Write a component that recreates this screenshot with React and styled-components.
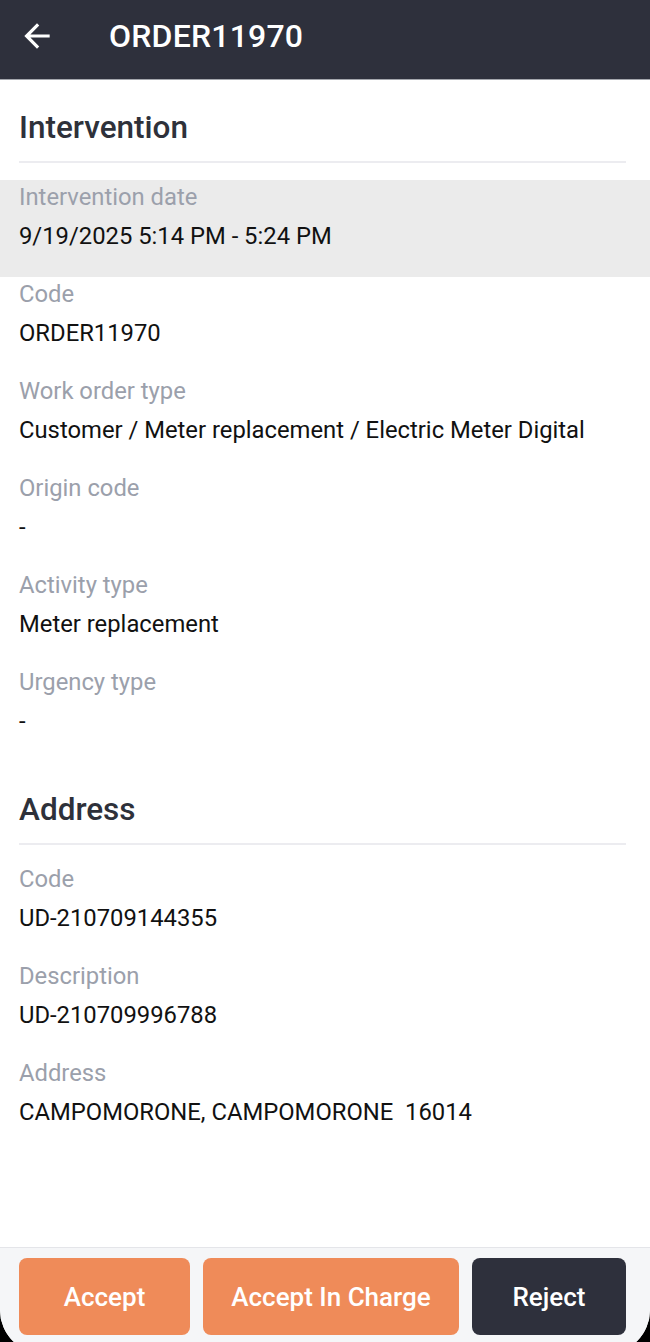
import React from "react";
import styled, { createGlobalStyle } from "styled-components";

const Global = createGlobalStyle`
  html, body {
    margin: 0;
    padding: 0;
    background: #000;
    overflow: hidden;
  }
  body {
    font-family: Roboto, "Liberation Sans", Arial, sans-serif;
  }
  * { box-sizing: border-box; }
`;

const Frame = styled.div`
  width: 650px;
  min-height: 1354px;
  background: #ffffff;
  display: flex;
  flex-direction: column;
  border-radius: 0 0 44px 44px;
  overflow: hidden;
`;

const Header = styled.header`
  height: 80px;
  background: #2e303c;
  border-bottom: 1px solid #a4a6ad;
  display: flex;
  align-items: center;
  padding-left: 18px;
  padding-bottom: 7px;
`;

const BackButton = styled.button`
  border: 0;
  background: transparent;
  padding: 0;
  width: 38px;
  height: 38px;
  display: flex;
  align-items: center;
  justify-content: center;
  color: #ffffff;
  cursor: pointer;
`;

const Title = styled.h1`
  margin: 0 0 0 53px;
  font-size: 32px;
  font-weight: 500;
  color: #ffffff;
  letter-spacing: 0.2px;
`;

const Content = styled.main`
  flex: 1;
  display: flex;
  flex-direction: column;
`;

const SectionHeading = styled.h2`
  margin: 30px 24px 17px 19px;
  padding-bottom: 15px;
  border-bottom: 2px solid #ececf0;
  font-size: 31.5px;
  line-height: 36px;
  font-weight: 500;
  color: #2e313a;
`;

const Field = styled.div`
  height: 97px;
  padding: 3px 24px 0 19px;
  background: ${(p) => (p.$highlight ? "#ebebeb" : "transparent")};
  display: flex;
  flex-direction: column;
  gap: 10px;
`;

const Label = styled.div`
  font-size: 23.8px;
  line-height: 28px;
  color: #9ba0ab;
`;

const Value = styled.div`
  font-size: 23.8px;
  line-height: 30px;
  color: #111111;
`;

const Footer = styled.footer`
  border-top: 1px solid #e4e5e9;
  background: #f5f6f8;
  padding: 10px 24px 19px 19px;
  display: grid;
  grid-template-columns: 171fr 256fr 154fr;
  gap: 13px;
`;

const ActionButton = styled.button`
  height: 77px;
  border: 0;
  border-radius: 8px;
  background: ${(p) => (p.$variant === "dark" ? "#2e303c" : "#ef8b59")};
  color: #ffffff;
  font-family: Roboto, "Liberation Sans", Arial, sans-serif;
  font-size: 26px;
  font-weight: 500;
  cursor: pointer;
`;

const BackArrow = () => (
  <svg width="38" height="38" viewBox="0 0 24 24" fill="currentColor">
    <path d="M20 11H7.83l5.59-5.59L12 4l-8 8 8 8 1.41-1.41L7.83 13H20v-2z" />
  </svg>
);

const intervention = [
  { label: "Intervention date", value: "9/19/2025 5:14 PM - 5:24 PM", highlight: true },
  { label: "Code", value: "ORDER11970" },
  { label: "Work order type", value: "Customer / Meter replacement / Electric Meter Digital" },
  { label: "Origin code", value: "-" },
  { label: "Activity type", value: "Meter replacement" },
  { label: "Urgency type", value: "-" },
];

const address = [
  { label: "Code", value: "UD-210709144355" },
  { label: "Description", value: "UD-210709996788" },
  { label: "Address", value: "CAMPOMORONE, CAMPOMORONE\u00a0 16014" },
];

export default function App() {
  return (
    <>
      <Global />
      <Frame>
        <Header>
          <BackButton aria-label="Back">
            <BackArrow />
          </BackButton>
          <Title>ORDER11970</Title>
        </Header>
        <Content>
          <SectionHeading>Intervention</SectionHeading>
          {intervention.map((f) => (
            <Field key={f.label} $highlight={f.highlight}>
              <Label>{f.label}</Label>
              <Value>{f.value}</Value>
            </Field>
          ))}
          <SectionHeading>Address</SectionHeading>
          {address.map((f) => (
            <Field key={f.label}>
              <Label>{f.label}</Label>
              <Value>{f.value}</Value>
            </Field>
          ))}
        </Content>
        <Footer>
          <ActionButton>Accept</ActionButton>
          <ActionButton>Accept In Charge</ActionButton>
          <ActionButton $variant="dark">Reject</ActionButton>
        </Footer>
      </Frame>
    </>
  );
}
